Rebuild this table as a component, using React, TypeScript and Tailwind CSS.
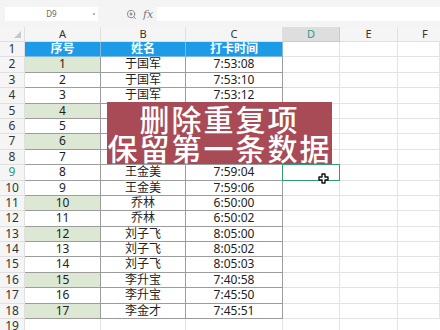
import React from 'react';
import { ZoomIn } from 'lucide-react';

// rows of the sheet: [序号, 姓名, 打卡时间, highlighted]; rows under the title box keep blank text
const rows: [string, string, string, boolean][] = [
  ['1', '于国军', '7:53:08', true],
  ['2', '于国军', '7:53:10', false],
  ['3', '于国军', '7:53:12', false],
  ['4', '', '', true],
  ['5', '', '', false],
  ['6', '', '', true],
  ['7', '', '', false],
  ['8', '王金美', '7:59:04', false],
  ['9', '王金美', '7:59:06', false],
  ['10', '乔林', '6:50:00', true],
  ['11', '乔林', '6:50:02', false],
  ['12', '刘子飞', '8:05:00', true],
  ['13', '刘子飞', '8:05:02', false],
  ['14', '刘子飞', '8:05:03', false],
  ['15', '李升宝', '7:40:58', true],
  ['16', '李升宝', '7:45:50', false],
  ['17', '李金才', '7:45:51', true],
];

const font = { fontFamily: '"Noto Sans", "Noto Sans CJK SC", sans-serif' };
const gridCols = 'grid grid-cols-[25px_76px_85px_97px_57px_58px_1fr]';
const light = 'border-r border-b border-[#e3e3e3]';
const dark = 'border-r border-b border-[#9c9c9c]';

function EmptyCells({ selectedD = false }: { selectedD?: boolean }) {
  return (
    <>
      <div className={`${light} relative`}>
        {selectedD && (
          <div className="absolute -left-px -top-px w-[58px] h-[16.4px] border-[1.5px] border-[#2f9c73]" />
        )}
      </div>
      <div className={light} />
      <div className={light} />
    </>
  );
}

export default function App() {
  return (
    <div className="w-[440px] h-[330px] overflow-hidden bg-white relative" style={font}>
      {/* toolbar */}
      <div className="h-[27px] bg-[#f4f4f4] flex items-start pt-[7px]">
        <div className="ml-[5px] w-[93px] h-[14px] bg-white flex items-center relative">
          <span className="w-full text-center text-[8px] text-[#666] leading-none">D9</span>
          <span className="absolute right-[3px] top-[6px] w-[2px] h-[2px] rounded-full bg-[#999]" />
        </div>
        <div className="ml-[28px] h-[14px] flex items-center">
          <ZoomIn className="w-[11px] h-[11px] text-[#777]" strokeWidth={1.8} />
        </div>
        <div className="ml-[6px] h-[14px] flex items-center text-[11px] italic text-[#777] leading-none" style={{ fontFamily: '"DejaVu Serif", serif' }}>
          fx
        </div>
        <div className="ml-[4px] flex-1 h-[14px] bg-white" />
      </div>

      {/* column header */}
      <div className={`${gridCols} h-[15px] bg-[#f5f5f5] text-[11px] text-[#333] leading-[14px]`}>
        <div className="border-r border-b border-[#e0e0e0] relative">
          <svg className="absolute right-[3px] bottom-[3px]" width="7" height="7" viewBox="0 0 7 7">
            <polygon points="7,0 7,7 0,7" fill="#c8c8c8" />
          </svg>
        </div>
        {['A', 'B', 'C'].map((c) => (
          <div key={c} className="border-r border-b border-[#e0e0e0] text-center">{c}</div>
        ))}
        <div className="border-r border-b border-[#c9c9c9] bg-[#dedede] text-center text-[#2e9b83]">D</div>
        <div className="border-r border-b border-[#e0e0e0] text-center">E</div>
        <div className="border-b border-[#e0e0e0] pl-[24px]">F</div>
      </div>

      {/* header row 1 */}
      <div className={`${gridCols} h-[15.4px] text-[12px] leading-[14px]`}>
        <div className="bg-[#f5f5f5] border-r border-b border-[#e0e0e0] text-center text-[#333]">1</div>
        {['序号', '姓名', '打卡时间'].map((h) => (
          <div key={h} className="bg-[#1d9be6] border-r border-b border-[#7fb9de] text-center text-white font-bold">
            {h}
          </div>
        ))}
        <EmptyCells />
      </div>

      {rows.map(([n, name, time, hi], i) => {
        const rowNo = i + 2;
        const sel = rowNo === 9;
        return (
          <div key={n} className={`${gridCols} h-[15.4px] text-[12px] leading-[14px] text-[#222]`}>
            <div className={`bg-[#f5f5f5] border-r border-b border-[#e0e0e0] text-center ${sel ? 'text-[#2e9b83]' : 'text-[#333]'}`}>
              {rowNo}
            </div>
            <div className={`${dark} text-center ${hi ? 'bg-[#dde8d4]' : ''}`}>{n}</div>
            <div className={`${dark} text-center`}>{name}</div>
            <div className={`${dark} text-center`}>{time}</div>
            <EmptyCells selectedD={sel} />
          </div>
        );
      })}

      <div className={`${gridCols} h-[12px] text-[12px] leading-[14px] overflow-hidden`}>
        <div className="bg-[#f5f5f5] border-r border-[#e0e0e0] text-center text-[#333]">19</div>
        <div className="border-r border-[#e3e3e3]" />
        <div className="border-r border-[#e3e3e3]" />
        <div className="border-r border-[#e3e3e3]" />
        <div className="border-r border-[#e3e3e3]" />
        <div className="border-r border-[#e3e3e3]" />
        <div />
      </div>

      {/* title overlay */}
      <div
        className="absolute left-[107px] top-[102px] w-[225px] h-[62px] bg-[#a84b56] text-white text-center text-[30px] leading-[29px] font-medium pt-[2px]"
        style={{ fontFamily: '"Noto Sans CJK SC", sans-serif' }}
      >
        <div className="tracking-[2px]">删除重复项</div>
        <div className="tracking-[2px] whitespace-nowrap">保留第一条数据</div>
      </div>

      {/* cell cursor */}
      <svg className="absolute left-[318px] top-[173px]" width="11" height="11" viewBox="0 0 11 11">
        <path d="M4 1h3v3h3v3H7v3H4V7H1V4h3z" fill="#fff" stroke="#111" strokeWidth="1.4" strokeLinejoin="round" />
      </svg>
    </div>
  );
}
